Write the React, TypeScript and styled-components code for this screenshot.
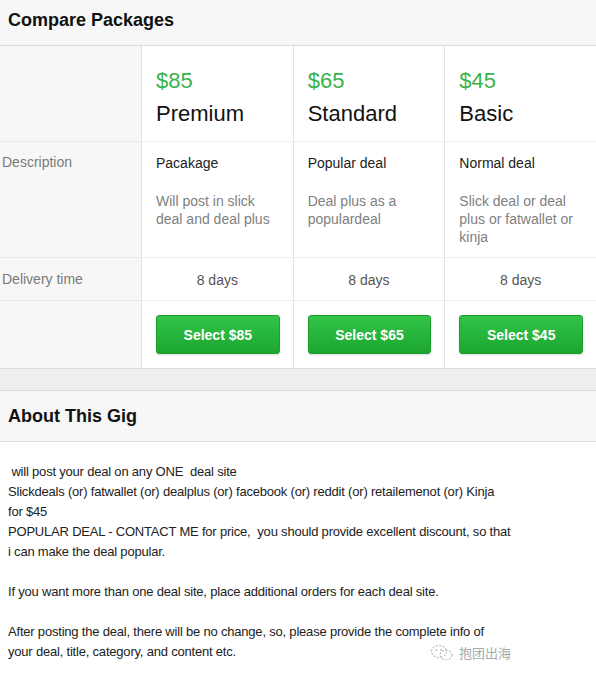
import styled, { createGlobalStyle } from 'styled-components';

const GlobalStyle = createGlobalStyle`
	html, body {
		margin: 0;
		padding: 0;
		background: #fff;
	}
	body {
		font-family: "Liberation Sans", Arial, sans-serif;
		color: #333;
	}
`;

const packages = [
	{
		price: 85,
		name: 'Premium',
		title: 'Pacakage',
		desc: 'Will post in slick deal and deal plus',
		days: 8,
	},
	{
		price: 65,
		name: 'Standard',
		title: 'Popular deal',
		desc: 'Deal plus as a populardeal',
		days: 8,
	},
	{
		price: 45,
		name: 'Basic',
		title: 'Normal deal',
		desc: 'Slick deal or deal plus or fatwallet or kinja',
		days: 8,
	},
];

const App = () => {
	return (
		<Page>
			<GlobalStyle />
			<SectionHeader>Compare Packages</SectionHeader>
			<Table>
				<LabelCell $row="head" />
				{packages.map((p) => (
					<HeadCell key={p.name}>
						<Price>${p.price}</Price>
						<PackName>{p.name}</PackName>
					</HeadCell>
				))}

				<LabelCell $row="desc">Description</LabelCell>
				{packages.map((p) => (
					<DescCell key={p.name}>
						<DescTitle>{p.title}</DescTitle>
						<DescText>{p.desc}</DescText>
					</DescCell>
				))}

				<LabelCell $row="time">Delivery time</LabelCell>
				{packages.map((p) => (
					<TimeCell key={p.name}>{p.days} days</TimeCell>
				))}

				<LabelCell $row="button" />
				{packages.map((p) => (
					<ButtonCell key={p.name}>
						<SelectButton>Select ${p.price}</SelectButton>
					</ButtonCell>
				))}
			</Table>

			<Divider />

			<SectionHeader $tall>About This Gig</SectionHeader>
			<About>
				<p>
					&nbsp;will post your deal on any ONE&nbsp; deal site
					<br />
					Slickdeals (or) fatwallet (or) dealplus (or) facebook (or) reddit (or) retailemenot (or) Kinja
					<br />
					for $45
					<br />
					POPULAR DEAL - CONTACT ME for price,&nbsp; you should provide excellent discount, so that
					<br />
					i can make the deal popular.
				</p>
				<p>If you want more than one deal site, place additional orders for each deal site.</p>
				<p>
					After posting the deal, there will be no change, so, please provide the complete info of
					<br />
					your deal, title, category, and content etc.
				</p>
			</About>
			<Watermark>
				<svg width="24" height="18" viewBox="0 0 24 18" fill="none" stroke="#b8b8b8" strokeWidth="1.1">
					<ellipse cx="9" cy="7.5" rx="7.5" ry="6" strokeDasharray="2 1.5" />
					<ellipse cx="16" cy="11" rx="6" ry="4.8" strokeDasharray="2 1.5" />
					<circle cx="6.5" cy="6" r="0.9" fill="#b8b8b8" stroke="none" />
					<circle cx="11" cy="6" r="0.9" fill="#b8b8b8" stroke="none" />
				</svg>
				<span>抱团出海</span>
			</Watermark>
		</Page>
	);
};

const Page = styled.div`
	position: relative;
	width: 596px;
	min-height: 678px;
	background: #fff;
`;

const SectionHeader = styled.h2<{ $tall?: boolean }>`
	margin: 0;
	height: ${(p) => (p.$tall ? '51px' : '46px')};
	padding: 0 8px;
	display: flex;
	align-items: center;
	background: #f7f7f7;
	border-bottom: 1px solid #dcdcdc;
	font-size: 18px;
	font-weight: bold;
	color: #111;
	padding-bottom: ${(p) => (p.$tall ? '0' : '4px')};
	box-sizing: border-box;
`;

const Table = styled.div`
	display: grid;
	grid-template-columns: 141px repeat(3, 1fr);
	grid-template-rows: 96px 116px 43px 67px;
`;

const Cell = styled.div`
	box-sizing: border-box;
	background: #fff;
	border-left: 1px solid #e2e2e2;
	border-bottom: 1px solid #efefef;
	font-size: 14px;
`;

const LabelCell = styled.div<{ $row: string }>`
	box-sizing: border-box;
	background: #f7f7f7;
	border-bottom: ${(p) => (p.$row === 'button' ? 'none' : '1px solid #e8e8e8')};
	padding: ${(p) => (p.$row === 'time' ? '0 2px' : '12px 2px 0')};
	display: flex;
	align-items: ${(p) => (p.$row === 'time' ? 'center' : 'flex-start')};
	font-size: 14px;
	color: #7a7a7a;
`;

const HeadCell = styled(Cell)`
	padding: 22px 14px 0;
`;

const Price = styled.div`
	font-size: 22px;
	line-height: 26px;
	color: #3ab34a;
`;

const PackName = styled.div`
	margin-top: 7px;
	font-size: 22px;
	line-height: 26px;
	color: #111;
`;

const DescCell = styled(Cell)`
	padding: 12px 14px 0;
`;

const DescTitle = styled.div`
	line-height: 18px;
	color: #222;
`;

const DescText = styled.div`
	margin-top: 20px;
	line-height: 18px;
	color: #808080;
	padding-right: 4px;
`;

const TimeCell = styled(Cell)`
	display: flex;
	align-items: center;
	justify-content: center;
	color: #555;
	padding-top: 1px;
`;

const ButtonCell = styled(Cell)`
	border-bottom: none;
	padding: 14px 13px 0 14px;
`;

const SelectButton = styled.button`
	width: 100%;
	height: 39px;
	border: 1px solid #1f9e30;
	border-radius: 3px;
	background: linear-gradient(#31c447, #1ca631);
	box-shadow: 0 1px 2px rgba(0, 0, 0, 0.15);
	color: #fff;
	font-family: "Liberation Sans", Arial, sans-serif;
	font-size: 14px;
	font-weight: bold;
	cursor: pointer;
	padding: 0;
`;

const Divider = styled.div`
	height: 23px;
	background: #eeeeee;
	border-top: 1px solid #dcdcdc;
	border-bottom: 1px solid #dedede;
	box-sizing: border-box;
`;

const About = styled.div`
	padding: 20px 8px 10px 8px;
	font-size: 13px;
	letter-spacing: -0.2px;
	line-height: 20px;
	color: #222;

	p {
		margin: 0 0 20px;
	}
`;

const Watermark = styled.div`
	position: absolute;
	left: 430px;
	top: 643px;
	display: flex;
	align-items: center;
	gap: 5px;
	color: #a9a9a9;
	font-size: 13px;
	font-family: "Noto Sans CJK SC", sans-serif;

	svg {
		display: block;
	}
`;

export default App;
